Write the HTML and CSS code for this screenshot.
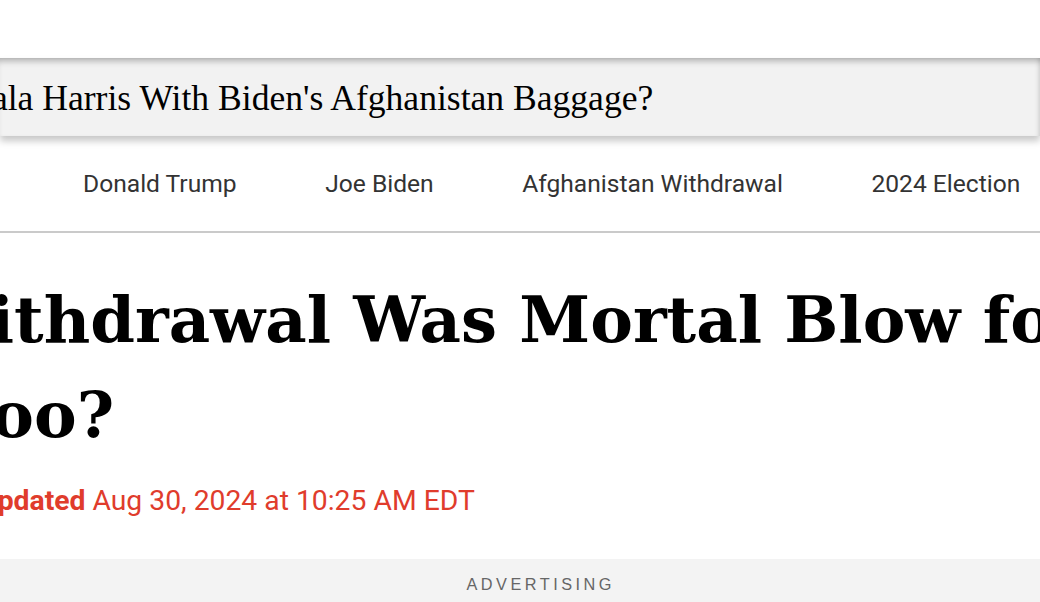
FILE: index.html
```html
<!DOCTYPE html>
<html lang="en">
<head>
<meta charset="utf-8">
<title>Article</title>
<link rel="stylesheet" href="styles.css">
</head>
<body>
<div class="page">
  <div class="top-space"></div>
  <div class="banner">
    <p class="banner-text">Can Trump Saddle Kamala Harris With Biden's Afghanistan Baggage?</p>
  </div>
  <nav class="topics">
    <a class="topic" href="#">Donald Trump</a>
    <a class="topic" href="#">Joe Biden</a>
    <a class="topic" href="#">Afghanistan Withdrawal</a>
    <a class="topic" href="#">2024 Election</a>
  </nav>
  <header class="article-head">
    <h1 class="headline">
      <span class="line line-1">Withdrawal Was Mortal Blow for Biden.</span>
      <span class="line line-2">Too?</span>
    </h1>
    <p class="dateline"><strong>Updated</strong> Aug 30, 2024 at 10:25 AM EDT</p>
  </header>
  <div class="ad">
    <span class="ad-label">ADVERTISING</span>
  </div>
</div>
</body>
</html>
```

FILE: styles.css
```css
html, body {
  margin: 0;
  padding: 0;
  background: #ffffff;
}
.page {
  width: 1040px;
  height: 602px;
  overflow: hidden;
}
.top-space {
  height: 58px;
}
.banner {
  height: 78px;
  background: #f2f2f2;
  box-shadow: inset 0 7px 6px -4px rgba(0,0,0,0.28), inset -4px 0 5px -3px rgba(0,0,0,0.15), 0 5px 7px rgba(0,0,0,0.22);
  display: flex;
  align-items: center;
  overflow: hidden;
  position: relative;
}
.banner-text {
  margin: 0;
  white-space: nowrap;
  font-family: "Liberation Serif", serif;
  font-size: 35.6px;
  color: #000;
  text-indent: -353px;
  padding-top: 2px;
}
.topics {
  height: 95px;
  display: flex;
  align-items: center;
  gap: 88.5px;
  padding-left: 83px;
  border-bottom: 2px solid #cacaca;
  white-space: nowrap;
  overflow: hidden;
}
.topic {
  font-family: Roboto, "Liberation Sans", sans-serif;
  font-size: 24.6px;
  color: #333;
  text-decoration: none;
}
.article-head {
  overflow: hidden;
}
.headline {
  margin: 0;
  padding-top: 39px;
  font-family: "DejaVu Serif", serif;
  font-weight: bold;
  font-size: 64px;
  line-height: 95px;
  color: #000;
  white-space: nowrap;
}
.line {
  display: block;
}
.line-1 {
  text-indent: -81px;
}
.line-2 {
  text-indent: -49px;
}
.dateline {
  margin: 22px 0 0;
  font-family: Roboto, "Liberation Sans", sans-serif;
  font-size: 28.3px;
  color: #e03c2c;
  white-space: nowrap;
  text-indent: -21px;
}
.dateline strong {
  font-weight: 700;
}
.ad {
  margin-top: 42px;
  height: 60px;
  background: #f3f3f3;
  display: flex;
  justify-content: center;
  padding-top: 16px;
  padding-left: 38px;
  box-sizing: border-box;
}
.ad-label {
  font-family: "Liberation Sans", Arial, sans-serif;
  font-size: 16.3px;
  letter-spacing: 3.5px;
  color: #666;
  padding-left: 3.5px;
}
```
